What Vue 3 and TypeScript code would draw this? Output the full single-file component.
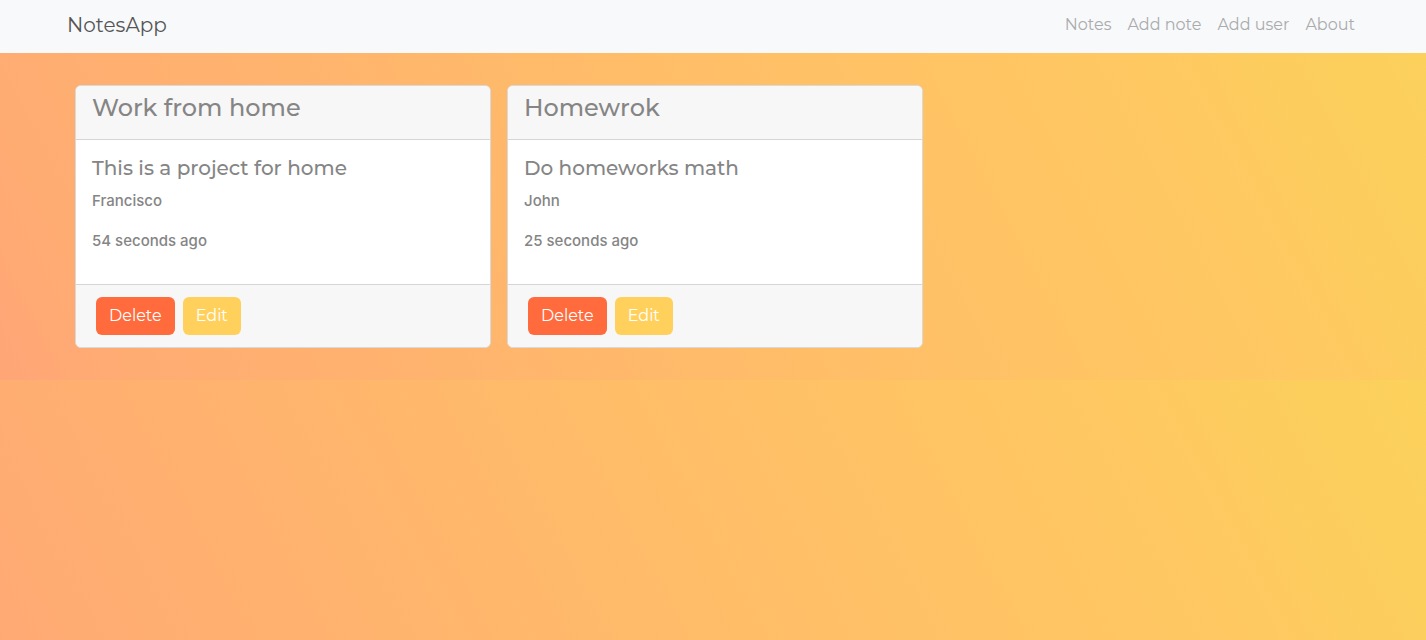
<script setup lang="ts">
interface Note {
  id: number
  title: string
  content: string
  author: string
  age: string
}

const links: string[] = ['Notes', 'Add note', 'Add user', 'About']

const notes: Note[] = [
  { id: 1, title: 'Work from home', content: 'This is a project for home', author: 'Francisco', age: '54 seconds ago' },
  { id: 2, title: 'Homewrok', content: 'Do homeworks math', author: 'John', age: '25 seconds ago' },
]
</script>

<template>
  <nav class="navbar">
    <a class="brand" href="#">NotesApp</a>
    <ul class="links">
      <li v-for="link in links" :key="link"><a href="#">{{ link }}</a></li>
    </ul>
  </nav>
  <main class="notes">
    <article v-for="note in notes" :key="note.id" class="card">
      <header class="card-header"><h2>{{ note.title }}</h2></header>
      <div class="card-body">
        <h3>{{ note.content }}</h3>
        <p>{{ note.author }}</p>
        <p>{{ note.age }}</p>
      </div>
      <footer class="card-footer">
        <button type="button" class="btn delete">Delete</button>
        <button type="button" class="btn edit">Edit</button>
      </footer>
    </article>
  </main>
</template>

<style>
body {
  margin: 0;
  background: linear-gradient(62deg, #ffa577, #ffab73 7%, #ffbd68 50%, #ffc961 82%, #fccd5d 89%, #fcd15b);
}
</style>

<style scoped>
.navbar,
.notes {
  box-sizing: border-box;
  padding: 0 63px 0 67px;
  font-family: Montserrat, Inter, sans-serif;
}

.navbar {
  display: flex;
  align-items: center;
  justify-content: space-between;
  height: 53px;
  padding-bottom: 4px;
  background: #f8f9fb;
}

.brand {
  color: #555;
  font-size: 20px;
  line-height: 30px;
  text-decoration: none;
}

.links {
  display: flex;
  margin: 0;
  padding: 0;
  list-style: none;
}

.links a {
  padding: 0 8px;
  color: #aaabac;
  font-size: 16px;
  line-height: 24px;
  text-decoration: none;
}

.notes {
  display: grid;
  grid-template-columns: repeat(3, 1fr);
  gap: 16px;
  padding: 32px 71px 32px 75px;
}

.card {
  overflow: hidden;
  border: 1px solid #d9d9d9;
  border-radius: 6px;
  background: #fff;
  color: #858585;
}

.card-header {
  padding: 7px 16px 17px;
  border-bottom: 1px solid #d6d6d6;
  background: #f7f7f7;
}

h2,
h3,
p {
  margin: 0;
}

h2 {
  font-size: 24px;
  font-weight: 500;
  line-height: 29px;
}

.card-body {
  padding: 16px 16px 31px;
}

h3 {
  margin-bottom: 9px;
  font-size: 20px;
  font-weight: 500;
  line-height: 24px;
}

p {
  font-family: Inter, sans-serif;
  font-size: 15px;
  font-weight: 500;
  line-height: 24px;
}

p + p {
  margin-top: 16px;
}

.card-footer {
  display: flex;
  gap: 8px;
  padding: 12px 20px;
  border-top: 1px solid #d6d6d6;
  background: #f7f7f7;
}

.btn {
  padding: 7px 13px;
  border: 0;
  border-radius: 6px;
  color: #fff;
  font-family: inherit;
  font-size: 16px;
  font-weight: 400;
  line-height: 24px;
  cursor: pointer;
}

.delete {
  background: #ff6b3d;
}

.edit {
  background: #ffd15c;
}
</style>
